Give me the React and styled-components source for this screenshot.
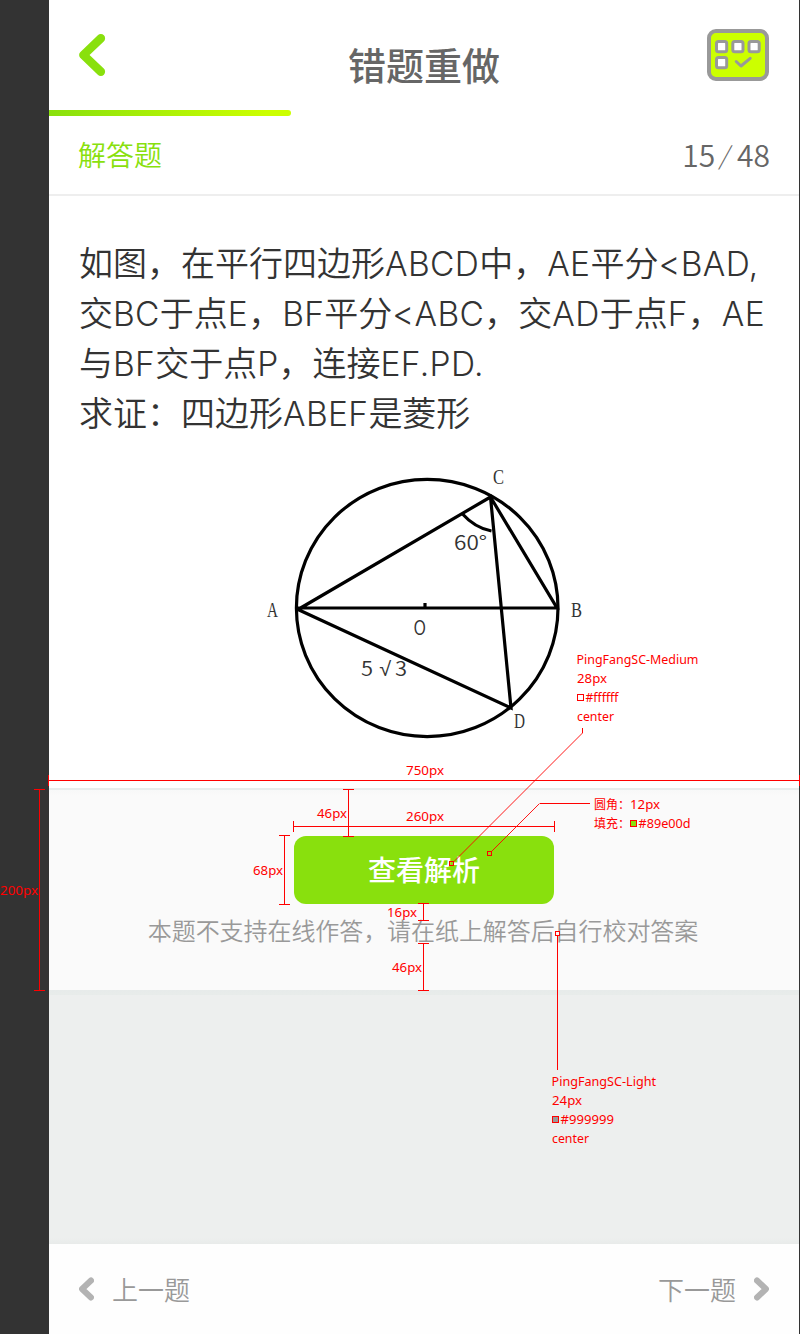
import React from "react";
import styled, { createGlobalStyle } from "styled-components";

const GlobalStyle = createGlobalStyle`
  * { box-sizing: border-box; }
  body { margin: 0; background: #333; }
`;

const cjk = `"Noto Sans CJK SC", sans-serif`;

const Board = styled.div`
  position: relative;
  width: 800px;
  height: 1334px;
  padding: 0 1px 0 49px;
  background: #333;
  overflow: hidden;
  font-family: ${cjk};
`;

const Screen = styled.div`
  display: flex;
  flex-direction: column;
  width: 750px;
  height: 1334px;
  background: #fff;
`;

const Header = styled.header`
  display: flex;
  justify-content: space-between;
  align-items: center;
  height: 110px;
  padding: 0 30px;
`;

const Title = styled.h1`
  margin: 0;
  padding-top: 18px;
  font-size: 38px;
  line-height: 56px;
  font-weight: 500;
  color: #666;
`;

const Icon = styled.svg`
  display: block;
  flex: none;
  fill: none;
  stroke-linecap: round;
  stroke-linejoin: round;
`;

const BackSlot = styled.div`
  width: 62px;
`;

const Progress = styled.div`
  width: 242px;
  height: 6px;
  border-radius: 0 3px 3px 0;
  background: linear-gradient(90deg, #89e00d, #ccff00 90%);
`;

const SubHeader = styled.div`
  display: flex;
  justify-content: space-between;
  align-items: center;
  height: 80px;
  padding: 0 29px 2px;
  border-bottom: 2px solid #eee;
`;

const Kind = styled.span`
  font-size: 28px;
  line-height: 40px;
  font-weight: 350;
  color: #89e00d;
`;

const Counter = styled.span`
  display: flex;
  align-items: center;
  gap: 5px;
  font-size: 30px;
  line-height: 38px;
  font-weight: 350;
  color: #666;
`;

const Slash = styled.span`
  padding: 0 1px;
  font-size: 25px;
  font-weight: 300;
  transform: skewX(-12deg);
`;

const Question = styled.section`
  flex: none;
  height: 592px;
  padding: 41px 0 0 30px;
`;

const Line = styled.p`
  margin: 0;
  height: 50px;
  line-height: 50px;
  font-size: 34px;
  font-weight: 350;
  white-space: nowrap;
  color: #333;
`;

const Latin = styled.span`
  font-family: Inter, "Liberation Sans", sans-serif;
  font-size: 33.5px;
  font-weight: 350;
  letter-spacing: 0.35px;
`;

const Figure = styled.svg`
  display: block;
  margin: 17px 0 0 171px;
  fill: none;
  stroke: #000;
  stroke-width: 3.2;

  text {
    fill: #333;
    stroke: none;
    font-family: "Liberation Serif", serif;
    font-size: 21px;
  }
  text.num {
    font-family: ${cjk};
    font-size: 20px;
    font-weight: 350;
  }
  text.root {
    font-family: "Liberation Mono", monospace;
    font-size: 20px;
  }
`;

const Panel = styled.section`
  display: flex;
  flex-direction: column;
  align-items: center;
  flex: none;
  height: 202px;
  padding-top: 46px;
  border-top: 2px solid #e8ecec;
  background: linear-gradient(#f7f8f8, #fafafa 6px);
`;

const Button = styled.button`
  width: 260px;
  height: 68px;
  padding: 0 0 2px;
  border: 0;
  border-radius: 12px;
  background: #89e00d;
  color: #fff;
  font: 500 28px/66px ${cjk};
`;

const Hint = styled.p`
  margin: 8px 2px 0 0;
  font-size: 24px;
  line-height: 36px;
  font-weight: 350;
  letter-spacing: -0.07px;
  color: #999;
`;

const Blank = styled.div`
  flex: 1;
  background:
    linear-gradient(#e7ebea, #e8ecea) top / 100% 5px no-repeat,
    linear-gradient(#edefee, #e8ebea) bottom / 100% 6px no-repeat,
    #edefee;
`;

const Footer = styled.footer`
  display: flex;
  justify-content: space-between;
  align-items: center;
  height: 90px;
  padding: 0 30px;
  background: #fefefe;
`;

const Nav = styled.div`
  display: flex;
  align-items: center;
  gap: 18px;
  font-size: 26px;
  line-height: 40px;
  font-weight: 350;
  color: #999;
`;

const Overlay = styled.svg`
  position: absolute;
  left: 0;
  top: 0;
  fill: none;
  stroke: #f00;
  stroke-width: 1;

  text {
    fill: #f00;
    stroke: none;
    font-family: "Noto Sans", "Noto Sans CJK SC", sans-serif;
    font-size: 12.5px;
  }
`;

const rulers = [
  "M48 780.5H800M48.5 775V786M799.5 775V786",
  "M39.5 789V991M34 789.5H45M34 990.5H45",
  "M348.5 789V837M343 789.5H354M343 836.5H354",
  "M293 826.5H555M293.5 821V832M554.5 821V832",
  "M284.5 835V905M279 835.5H290M279 904.5H290",
  "M423.5 903V921M418 903.5H429M418 920.5H429",
  "M423.5 943V991M418 943.5H429M418 990.5H429",
  "M590 803.5H539.5",
  "M582.5 728V733",
  "M557.5 936V1070",
];

const leaders = ["M582.5 733L454 861.5", "M539.5 803.5L491.5 851.5"];

const handles = [
  [449.5, 861.5, 4, "none"],
  [487.5, 851.5, 4, "none"],
  [555.5, 931.5, 4, "#fafafa"],
  [577.5, 694.5, 6, "#fff"],
  [630.5, 820.5, 6, "#89e00d"],
  [552.5, 1116.5, 6, "#999"],
];

const notes = [
  ["PingFangSC-Medium", 576.5, 664, 122],
  ["28px", 577, 683, 30],
  ["#ffffff", 585.5, 702, 33],
  ["center", 577, 721, 37],
  ["750px", 406, 775, 38],
  ["260px", 406, 821, 38],
  ["46px", 317, 818, 30],
  ["68px", 253, 875, 30],
  ["200px", 0, 895, 38],
  ["16px", 387, 917, 30],
  ["46px", 392, 972, 30],
  ["圆角：", 594, 809, 36],
  ["12px", 630, 809, 30],
  ["填充：", 594, 828, 36],
  ["#89e00d", 638.5, 828, 52],
  ["PingFangSC-Light", 551.5, 1086, 104.5],
  ["24px", 552, 1105, 30],
  ["#999999", 560.5, 1124, 53.5],
  ["center", 552, 1143, 37],
];

const figureLabels = [
  ["C", 493, 484, 11],
  ["A", 267, 617, 11],
  ["B", 571, 617, 11],
  ["D", 514, 728, 11],
];

const figureNumbers = [
  ["60°", 454, 549.5, 33],
  ["O", 413.5, 634.5, 12.5],
  ["5", 361, 676, 12],
  ["3", 395, 676, 12],
];

const figureRoots = [["√", 379, 676, 13]];

function Chevron({ flip }) {
  return (
    <Icon width="15" height="24" viewBox="0 0 15 24" stroke="#b3b3b3" strokeWidth="6">
      <path d={flip ? "M3 3.5L12 12L3 20.5" : "M12 3.5L3 12L12 20.5"} />
    </Icon>
  );
}

function Labels({ items, className }) {
  return items.map(([t, x, y, w]) => (
    <text key={`${x}-${y}`} className={className} x={x} y={y} textLength={w} lengthAdjust="spacingAndGlyphs">
      {t}
    </text>
  ));
}

export default function App() {
  return (
    <Board lang="zh-CN">
      <GlobalStyle />
      <Screen>
        <Header>
          <BackSlot>
            <Icon width="27" height="44" viewBox="0 0 27 44" stroke="#89e00d" strokeWidth="8.6">
              <path d="M21.8 5.3L4.4 22L21.8 38.7" />
            </Icon>
          </BackSlot>
          <Title>错题重做</Title>
          <Icon width="62" height="52" viewBox="0 0 62 52" stroke="#999" strokeWidth="3">
            <rect x="2" y="2" width="58" height="48" rx="7" fill="#cf0" strokeWidth="4" />
            <rect x="9.5" y="12.5" width="10.2" height="10.2" rx="2" fill="#fff" />
            <rect x="25.8" y="12.5" width="10.2" height="10.2" rx="2" fill="#fff" />
            <rect x="42" y="12.5" width="10.2" height="10.2" rx="2" fill="#fff" />
            <rect x="9.5" y="28.5" width="10.2" height="10.2" rx="2" fill="#fff" />
            <path d="M29.2 32.5L34 37L43.2 29.3" />
          </Icon>
        </Header>
        <Progress />
        <SubHeader>
          <Kind>解答题</Kind>
          <Counter>
            <span>15</span>
            <Slash>/</Slash>
            <span>48</span>
          </Counter>
        </SubHeader>
        <Question>
          <Line>如图，在平行四边形<Latin>ABCD</Latin>中，<Latin>AE</Latin>平分<Latin>&lt;BAD,</Latin></Line>
          <Line>交<Latin>BC</Latin>于点<Latin>E</Latin>，<Latin>BF</Latin>平分<Latin>&lt;ABC</Latin>，交<Latin>AD</Latin>于点<Latin>F</Latin>，<Latin>AE</Latin></Line>
          <Line>与<Latin>BF</Latin>交于点<Latin>P</Latin>，连接<Latin>EF.PD.</Latin></Line>
          <Line>求证：四边形<Latin>ABEF</Latin>是菱形</Line>
          <Figure width="350" height="300" viewBox="250 454 350 300">
            <ellipse cx="427.2" cy="608" rx="130.8" ry="128.6" />
            <path d="M298 609.5L490.5 497L511 708L298 609.5M298 608H557L490.5 497" />
            <path d="M425 603V608" />
            <path d="M462 513.5Q475 528 491.5 531" />
            <Labels items={figureLabels} />
            <Labels items={figureNumbers} className="num" />
            <Labels items={figureRoots} className="root" />
          </Figure>
        </Question>
        <Panel>
          <Button>查看解析</Button>
          <Hint>本题不支持在线作答，请在纸上解答后自行校对答案</Hint>
        </Panel>
        <Blank />
        <Footer>
          <Nav>
            <Chevron />
            <span>上一题</span>
          </Nav>
          <Nav>
            <span>下一题</span>
            <Chevron flip />
          </Nav>
        </Footer>
      </Screen>
      <Overlay width="800" height="1334" viewBox="0 0 800 1334">
        {rulers.map((d) => (
          <path key={d} d={d} shapeRendering="crispEdges" />
        ))}
        {leaders.map((d) => (
          <path key={d} d={d} strokeWidth="0.9" />
        ))}
        {handles.map(([x, y, s, fill]) => (
          <rect key={`${x}-${y}`} x={x} y={y} width={s} height={s} fill={fill} />
        ))}
        <Labels items={notes} />
      </Overlay>
    </Board>
  );
}
